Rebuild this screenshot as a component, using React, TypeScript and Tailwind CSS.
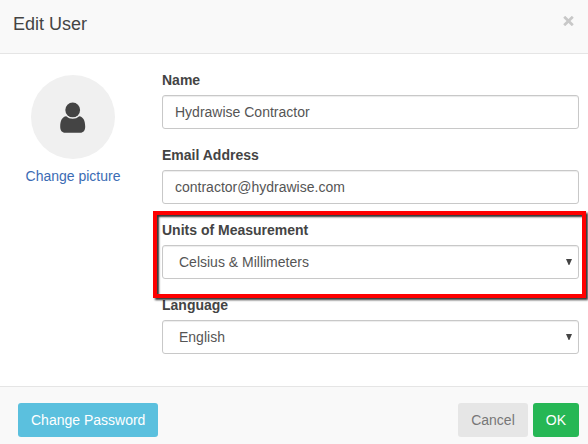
import React, { useState } from 'react';

interface FieldProps {
  id: string;
  label: string;
  children: React.ReactNode;
}

const controlClass =
  'block h-[34px] w-full rounded-[3px] border border-[#c8c8c8] bg-white text-sm text-[#555] shadow-[inset_0_1px_1px_rgba(0,0,0,0.075)] outline-none';

const Field: React.FC<FieldProps> = ({ id, label, children }) => (
  <div>
    <label htmlFor={id} className="mb-[5px] block text-sm font-bold text-[#444]">
      {label}
    </label>
    {children}
  </div>
);

interface SelectBoxProps {
  id: string;
  value: string;
  options: string[];
  onChange: (value: string) => void;
}

const SelectBox: React.FC<SelectBoxProps> = ({ id, value, options, onChange }) => (
  <div className="relative">
    <select
      id={id}
      value={value}
      onChange={(e) => onChange(e.target.value)}
      className={`${controlClass} appearance-none pr-8 pl-4`}
    >
      {options.map((option) => (
        <option key={option}>{option}</option>
      ))}
    </select>
    <svg viewBox="0 0 6 6" className="pointer-events-none absolute top-3.5 right-[7px] size-1.5 fill-[#444]">
      <path d="M0 0h6L3.4 6h-.8z" />
    </svg>
  </div>
);

export default function App() {
  const [name, setName] = useState('Hydrawise Contractor');
  const [email, setEmail] = useState('contractor@hydrawise.com');
  const [units, setUnits] = useState('Celsius & Millimeters');
  const [language, setLanguage] = useState('English');

  return (
    <div className="bg-white font-['Liberation_Sans',Arial,sans-serif] text-sm text-[#444]">
      {/* Header */}
      <header className="flex items-start justify-between border-b border-[#e5e5e5] bg-[#f9f9f9] px-[13px] pt-3 pb-[17px]">
        <h1 className="text-lg leading-6">Edit User</h1>
        <button type="button" aria-label="Close" className="pt-1">
          <svg viewBox="0 0 12 10" className="h-2.5 w-3 stroke-[#c8c8c8]" strokeWidth="2.8">
            <path d="M1.2 .8l8.6 8.4M9.8 .8L1.2 9.2" />
          </svg>
        </button>
      </header>

      {/* Body */}
      <main className="flex py-4">
        <div className="flex w-[146px] shrink-0 flex-col items-center pt-[5px]">
          <div className="flex size-[84px] items-center justify-center rounded-full bg-[#f0f0f0]">
            <svg viewBox="0 0 26 32" className="h-8 w-[26px] fill-[#444]">
              <circle cx="12.7" cy="8.9" r="7.4" />
              <path d="M6.2 15.2C2.3 15.7.2 19.4.2 25.8c0 3.8 1.8 6 5 6h15c3.2 0 5-2.2 5-6 0-6.4-2.1-10.1-6-10.6-1.8 1.7-4 2.5-6.5 2.5s-4.7-.8-6.5-2.5z" />
            </svg>
          </div>
          <a href="#picture" className="mt-[7px] text-[#3b6cb4]">
            Change picture
          </a>
        </div>

        <form id="user-form" className="mr-[9px] ml-4 flex min-w-0 flex-1 flex-col gap-4 pb-4">
          <Field id="name" label="Name">
            <input
              id="name"
              type="text"
              value={name}
              onChange={(e) => setName(e.target.value)}
              className={`${controlClass} px-3`}
            />
          </Field>
          <Field id="email" label="Email Address">
            <input
              id="email"
              type="email"
              value={email}
              onChange={(e) => setEmail(e.target.value)}
              className={`${controlClass} px-3`}
            />
          </Field>
          <div className="relative">
            <Field id="units" label="Units of Measurement">
              <SelectBox
                id="units"
                value={units}
                options={['Celsius & Millimeters', 'Fahrenheit & Inches']}
                onChange={setUnits}
              />
            </Field>
            {/* Callout frame around the units field */}
            <div className="pointer-events-none absolute -top-[9px] -right-[7px] -bottom-[19px] -left-[9px] z-10 border-4 border-[#fe0000] shadow-[2px_2px_2px_rgba(0,0,0,0.8),inset_2px_2px_2px_rgba(0,0,0,0.8)]" />
          </div>
          <Field id="language" label="Language">
            <SelectBox id="language" value={language} options={['English', 'Spanish', 'French']} onChange={setLanguage} />
          </Field>
        </form>
      </main>

      {/* Footer */}
      <footer className="flex justify-between border-t border-[#e5e5e5] bg-[#f9f9f9] pt-4 pr-[9px] pb-[7px] pl-[18px]">
        <button type="button" className="h-[34px] rounded-[3px] bg-[#5bc0de] px-[13px] text-white">
          Change Password
        </button>
        <div className="flex gap-[5px]">
          <button type="button" className="h-[34px] rounded-[3px] bg-[#e6e6e6] px-[13px] text-[#777]">
            Cancel
          </button>
          <button type="submit" form="user-form" className="h-[34px] rounded-[3px] bg-[#26b755] px-[13px] text-white">
            OK
          </button>
        </div>
      </footer>
    </div>
  );
}
